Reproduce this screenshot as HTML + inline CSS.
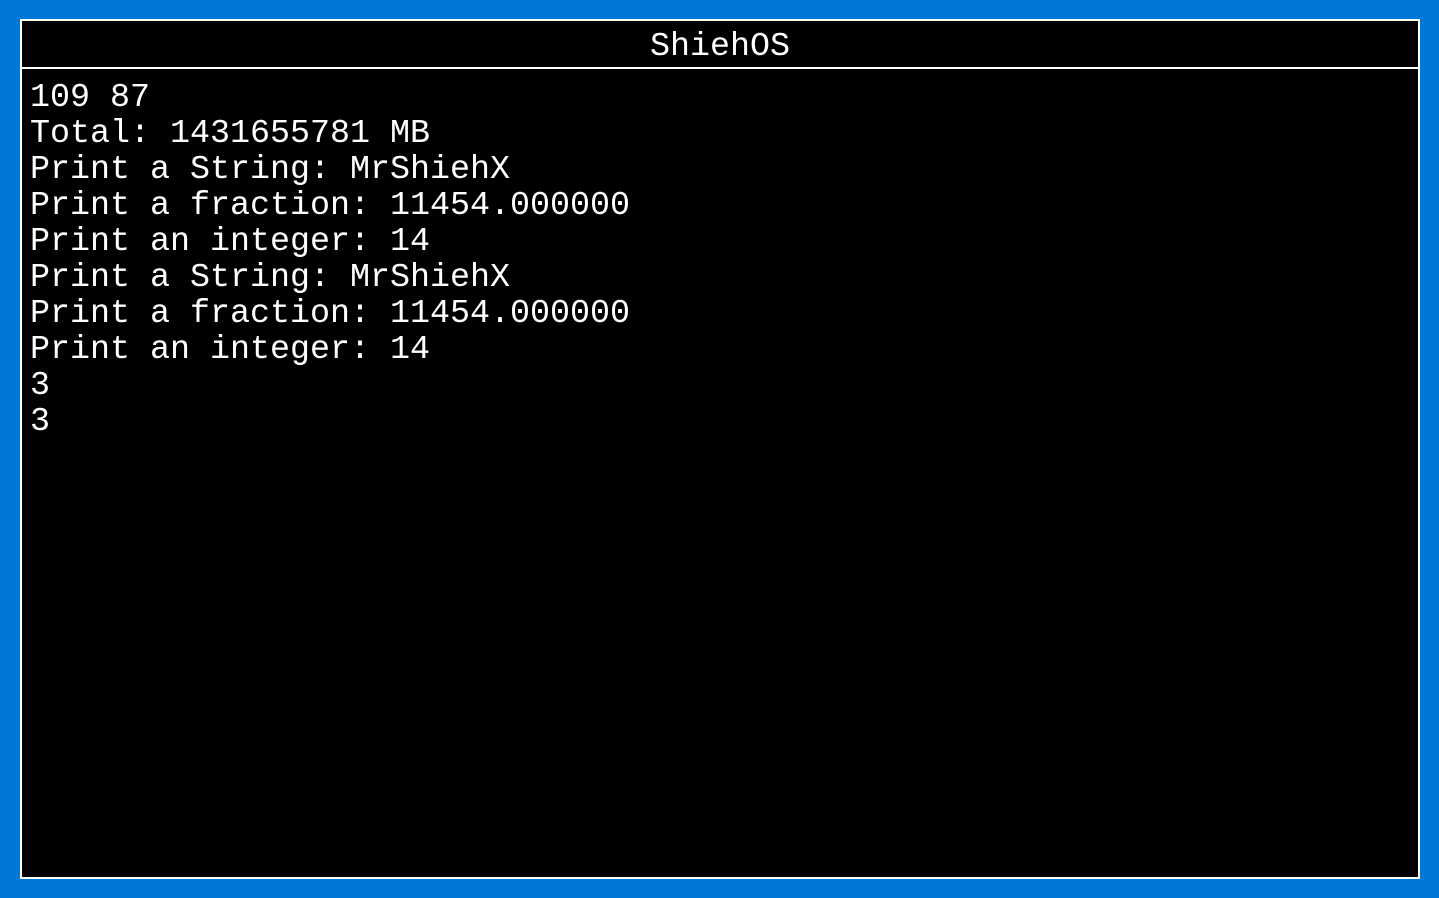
<!DOCTYPE html>
<html><head><style>
html,body{margin:0;padding:0;width:1439px;height:898px;background:#0078d7;overflow:hidden}
#w{position:absolute;left:20px;top:19px;width:1396px;height:856px;border:2px solid #fff;background:#000}
#t{position:absolute;left:0;top:0;width:1396px;height:46px;border-bottom:2px solid #fff;color:#fff;font:33.33px "Liberation Mono",monospace;text-align:center;line-height:52px}
#c{position:absolute;left:8px;top:59px;color:#fff;font:33.33px/36px "Liberation Mono",monospace;white-space:pre;margin:0}
</style></head><body>
<div id="w"><div id="t">ShiehOS</div>
<pre id="c">109 87
Total: 1431655781 MB
Print a String: MrShiehX
Print a fraction: 11454.000000
Print an integer: 14
Print a String: MrShiehX
Print a fraction: 11454.000000
Print an integer: 14
3
3</pre></div>
</body></html>
